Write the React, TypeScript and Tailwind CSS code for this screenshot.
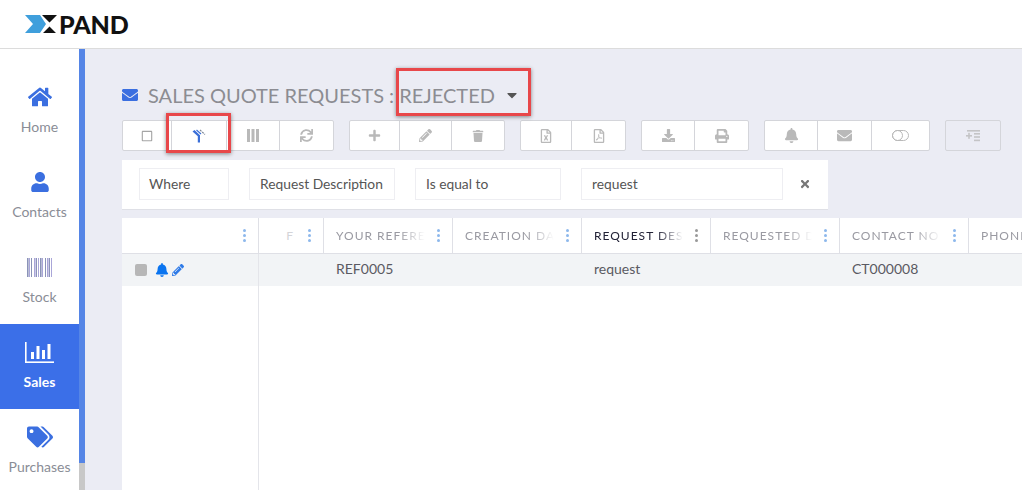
import React from "react";
import {
  FaBell,
  FaCaretDown,
  FaDownload,
  FaEnvelope,
  FaHome,
  FaPencilAlt,
  FaPlus,
  FaPrint,
  FaRegFileExcel,
  FaRegFilePdf,
  FaRegSquare,
  FaSync,
  FaTags,
  FaTimes,
  FaTrash,
  FaUser,
} from "react-icons/fa";

const Barcode = () => (
  <svg width="26" height="19" viewBox="0 0 26 19">
    {[0, 2, 4, 7, 9, 11, 13, 15, 18, 20, 22, 24].map((x, i) => (
      <rect key={x} x={x} width={i % 3 === 0 ? 1.6 : 1} height="19" fill={i % 2 ? "#a9a6d8" : "#8b93b8"} />
    ))}
  </svg>
);

const SalesChart = () => (
  <svg width="29" height="21" viewBox="0 0 29 21" fill="#fff">
    <rect x="0" y="0" width="1.6" height="21" />
    <rect x="0" y="19.4" width="29" height="1.6" />
    <rect x="6" y="10" width="3" height="7" />
    <rect x="11.5" y="4" width="3" height="13" />
    <rect x="17" y="8" width="3" height="9" />
    <rect x="22.5" y="2" width="3" height="15" />
  </svg>
);

const SortFilter = () => (
  <svg width="14" height="14" viewBox="0 0 14 14">
    <path d="M0.5 2.5 L2.5 1 L8 6.2 V13.5 H5.8 V7.2 Z" fill="#3a6fd8" />
    <path d="M4.5 1 L9 5" stroke="#3a6fd8" strokeWidth="1.2" fill="none" />
    <path d="M8 1 L13 5.5" stroke="#7a8494" strokeWidth="1.2" strokeDasharray="2 1" fill="none" />
  </svg>
);

const ColumnsIcon = () => (
  <svg width="12" height="13" viewBox="0 0 12 13" fill="#b9b9b9">
    <rect x="0" width="3" height="13" />
    <rect x="4.5" width="3" height="13" />
    <rect x="9" width="3" height="13" />
  </svg>
);

const ToggleIcon = () => (
  <svg width="17" height="11" viewBox="0 0 17 11" fill="none" stroke="#b9b9b9" strokeWidth="1">
    <rect x="0.5" y="0.5" width="16" height="10" rx="5" />
    <circle cx="5.5" cy="5.5" r="5" />
  </svg>
);

const TuneIcon = () => (
  <svg width="14" height="12" viewBox="0 0 14 12" fill="#c4c4c6">
    <rect x="1" y="0" width="13" height="1.6" />
    <rect x="0" y="5" width="6" height="1.6" />
    <rect x="2.2" y="2.8" width="1.6" height="6" />
    <rect x="8" y="3" width="6" height="1.6" />
    <rect x="8" y="6.2" width="6" height="1.6" />
    <rect x="8" y="9.6" width="6" height="1.6" />
  </svg>
);

const DotsMenu = ({ color = "text-[#8db8ec]" }: { color?: string }) => (
  <div className={`flex flex-col gap-[2px] shrink-0 ${color}`}>
    <span className="w-[3px] h-[3px] rounded-full bg-current" />
    <span className="w-[3px] h-[3px] rounded-full bg-current" />
    <span className="w-[3px] h-[3px] rounded-full bg-current" />
  </div>
);

const navItems = [
  { label: "Home", icon: <FaHome size={24} className="text-[#3b6fe0]" /> },
  { label: "Contacts", icon: <FaUser size={20} className="text-[#3b6fe0]" /> },
  { label: "Stock", icon: <Barcode /> },
  { label: "Sales", icon: <SalesChart />, active: true },
  { label: "Purchases", icon: <FaTags size={26} className="text-[#3b6fe0]" /> },
];

const iconGrey = "text-[#b9b9b9]";

const toolbar = [
  [
    { w: "w-[49px]", icon: <FaRegSquare size={12} className="text-[#a5a5a5]" /> },
    { w: "w-[55px]", icon: <SortFilter /> },
    { w: "w-[53px]", icon: <ColumnsIcon /> },
    { w: "w-[53px]", icon: <FaSync size={13} className={iconGrey} /> },
  ],
  [
    { w: "w-[50px]", icon: <FaPlus size={13} className={iconGrey} /> },
    { w: "w-[52px]", icon: <FaPencilAlt size={13} className={iconGrey} /> },
    { w: "w-[52px]", icon: <FaTrash size={12} className={iconGrey} /> },
  ],
  [
    { w: "w-[51px]", icon: <FaRegFileExcel size={14} className={iconGrey} /> },
    { w: "w-[53px]", icon: <FaRegFilePdf size={14} className={iconGrey} /> },
  ],
  [
    { w: "w-[53px]", icon: <FaDownload size={13} className={iconGrey} /> },
    { w: "w-[53px]", icon: <FaPrint size={14} className={iconGrey} /> },
  ],
  [
    { w: "w-[53px]", icon: <FaBell size={15} className={iconGrey} /> },
    { w: "w-[54px]", icon: <FaEnvelope size={15} className={iconGrey} /> },
    { w: "w-[57px]", icon: <ToggleIcon /> },
  ],
];

const columns = [
  { label: "F", w: "w-[65px]", box: "w-[38px] text-right pr-[14px]", fade: "text-[#d4d4d8]" },
  { label: "YOUR REFERE", w: "w-[129px]" },
  { label: "CREATION DA", w: "w-[129px]" },
  { label: "REQUEST DES", w: "w-[129px]", active: true },
  { label: "REQUESTED D", w: "w-[129px]" },
  { label: "CONTACT NO", w: "w-[129px]" },
  { label: "PHONE", w: "w-[100px]", noMenu: true },
];

const cells = [
  { text: "", w: "w-[65px]" },
  { text: "REF0005", w: "w-[129px]" },
  { text: "", w: "w-[129px]" },
  { text: "request", w: "w-[129px]" },
  { text: "", w: "w-[129px]" },
  { text: "CT000008", w: "w-[129px]" },
  { text: "", w: "w-[100px]" },
];

const filters = [
  { text: "Where", w: "w-[90px] pl-[9px]" },
  { text: "Request Description", w: "w-[146px] pl-[10px]" },
  { text: "Is equal to", w: "w-[146px] pl-[10px]" },
  { text: "request", w: "w-[202px] pl-[10px]" },
];

export default function App() {
  return (
    <div className="relative flex flex-col h-[490px] w-[1022px] overflow-hidden bg-white font-['Lato',sans-serif]">
      <header className="flex items-center h-[49px] shrink-0 pl-[25px] border-b border-[#dcdcdc] bg-white">
        <svg width="34" height="18" viewBox="0 0 34 18">
          <path d="M0 0 H15 L21 9 L15 18 H0 L8 9 Z" fill="#3f9fdc" />
          <path d="M17 0 H32 L24.5 7.5 Z M18 18 H31 L24.5 11.5 Z" fill="#111" />
        </svg>
        <span className="text-[25px] leading-none font-black text-[#111] tracking-[-0.2px]">PAND</span>
      </header>

      <div className="flex flex-1 min-h-0">
        <nav className="w-[79px] shrink-0 pt-[20px] bg-white">
          {navItems.map((item) => (
            <div
              key={item.label}
              className={`flex flex-col items-center h-[85px] ${item.active ? "bg-[#3b6fe8]" : ""}`}
            >
              <div className="flex items-center justify-center h-[30px] mt-[13px]">{item.icon}</div>
              <span
                className={`mt-[5px] text-[14px] leading-[20px] ${item.active ? "text-white font-bold" : "text-[#8a8d96]"}`}
              >
                {item.label}
              </span>
            </div>
          ))}
        </nav>

        <div className="flex flex-col w-[6px] shrink-0 bg-[#c8c8c8]">
          <div className="h-[414px] bg-[#5585e6]" />
        </div>

        <main className="flex-1 min-w-0 overflow-hidden pl-[37px] pt-[32px] bg-[#ebecf4]">
          <div className="flex items-center h-[28px] text-[#8c8c92]">
            <FaEnvelope size={16} className="text-[#3b6fe0]" />
            <h1 className="ml-[10px] text-[20px] leading-[28px] font-normal">SALES QUOTE REQUESTS : REJECTED</h1>
            <FaCaretDown size={16} className="ml-[9px] text-[#555]" />
          </div>

          <div className="flex mt-[11px] gap-[15px]">
            {toolbar.map((group, g) => (
              <div key={g} className="flex h-[31px] bg-white border border-[#d4d5da] rounded-[2px] divide-x divide-[#d4d5da]">
                {group.map((btn, b) => (
                  <div key={b} className={`flex items-center justify-center ${btn.w}`}>
                    {btn.icon}
                  </div>
                ))}
              </div>
            ))}
            <div className="flex items-center justify-center w-[56px] h-[31px] border border-[#d4d5da] rounded-[2px]">
              <TuneIcon />
            </div>
          </div>

          <div className="flex items-center w-[706px] h-[50px] mt-[9px] pl-[17px] pb-[1px] gap-[20px] bg-white border-b border-[#dfe0e6]">
            {filters.map((f) => (
              <div
                key={f.text}
                className={`flex items-center h-[32px] border border-[#eeeef2] text-[13.8px] whitespace-nowrap text-[#555] ${f.w}`}
              >
                {f.text}
              </div>
            ))}
            <FaTimes size={12} className="ml-[-4px] text-[#777]" />
          </div>

          <div className="flex flex-col mt-[8px] h-[272px] w-[947px] bg-white">
            <div className="flex h-[36px] border-b border-[#dfe0e6] shrink-0">
              <div className="flex items-center justify-end w-[137px] shrink-0 pr-[12px] border-r border-[#dfe0e6]">
                <DotsMenu />
              </div>
              {columns.map((c) => (
                <div
                  key={c.label}
                  className={`flex items-center justify-between shrink-0 pl-[12px] pr-[12px] border-r border-[#dfe0e6] ${c.w}`}
                >
                  <span
                    className={`block text-[12px] tracking-[1px] whitespace-nowrap ${c.box ?? "w-[89px] [mask-image:linear-gradient(to_right,black_70%,transparent)]"} ${c.fade ?? (c.active ? "text-[#222236]" : "text-[#9a9aa2]")}`}
                  >
                    {c.label}
                  </span>
                  {!c.noMenu && <DotsMenu color={c.active ? "text-[#999]" : "text-[#8db8ec]"} />}
                </div>
              ))}
            </div>

            <div className="flex h-[32px] shrink-0 bg-[#f2f4f6]">
              <div className="flex items-center w-[137px] shrink-0 pl-[13px] border-r border-[#e4e5ea]">
                <span className="w-[12px] h-[12px] rounded-[2px] bg-[#b7b7b7]" />
                <FaBell size={14} className="ml-[8px] text-[#0a74f0]" />
                <FaPencilAlt size={12} className="ml-[3px] text-[#2f7be8]" />
              </div>
              {cells.map((c, i) => (
                <div key={i} className={`flex items-center shrink-0 pl-[12px] pb-[3px] text-[14px] text-[#5a5a62] ${c.w}`}>
                  {c.text}
                </div>
              ))}
            </div>

            <div className="flex-1 min-h-0">
              <div className="w-[137px] h-full border-r border-[#e4e5ea]" />
            </div>
          </div>
        </main>
      </div>

      <div className="absolute left-[166px] top-[113px] w-[65px] h-[40px] border-[3px] border-[#e8474a] shadow-[0_1px_4px_rgba(0,0,0,0.45)]" />
      <div className="absolute left-[396px] top-[68px] w-[135px] h-[48px] border-[3px] border-[#e8474a] shadow-[0_1px_4px_rgba(0,0,0,0.45)]" />
    </div>
  );
}
